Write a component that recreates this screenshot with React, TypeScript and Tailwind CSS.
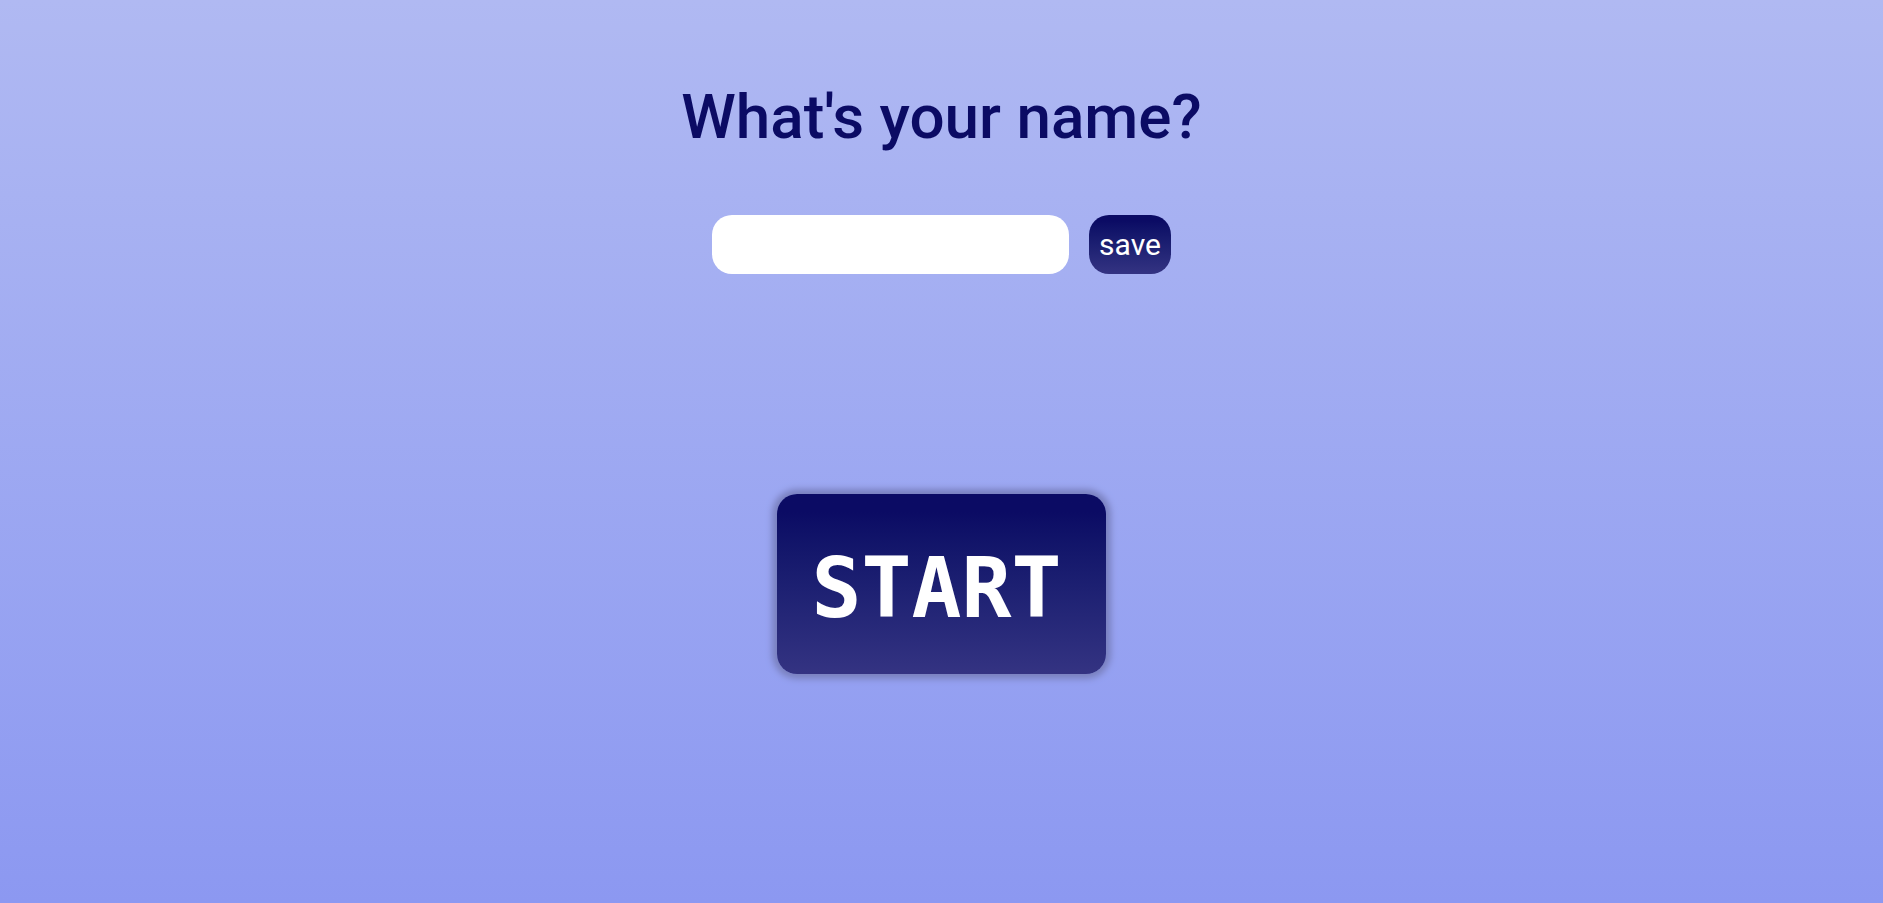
import React, { useState } from 'react';

const App: React.FC = () => {
  const [name, setName] = useState('');

  const handleSubmit = (e: React.FormEvent) => {
    e.preventDefault();
    setName(name.trim());
  };

  return (
    <main className="min-h-screen flex flex-col items-center pt-20 pb-10 bg-linear-to-b from-[#b0b9f2] to-[#8c98f1] font-['Roboto',sans-serif]">
      <form onSubmit={handleSubmit} className="flex flex-col items-center">
        <label
          htmlFor="name"
          className="mb-[61px] text-[62px] leading-[74px] font-medium text-center text-[#0b0b64]"
        >
          What's your name?
        </label>
        <div className="flex justify-center gap-5">
          <input
            id="name"
            type="text"
            value={name}
            onChange={(e) => setName(e.target.value)}
            className="w-[357px] h-[59px] px-4 rounded-[20px] bg-white text-[30px] text-[#0b0b64] outline-none"
          />
          <button
            type="submit"
            className="h-[59px] w-[82px] rounded-[20px] bg-linear-to-b from-[#0b0b64] from-10% to-[#343382] text-[30px] text-white"
          >
            save
          </button>
        </div>
      </form>

      <button
        type="button"
        className="mt-[220px] h-[180px] pt-2 pl-[35px] pr-[45px] rounded-[20px] bg-linear-to-b from-[#0b0b64] from-10% to-[#343382] shadow-[0_0_6px_5px_#7a81bf] font-['DejaVu_Sans_Mono',monospace] text-[83px] leading-none font-bold text-white"
      >
        START
      </button>
    </main>
  );
};

export default App;
